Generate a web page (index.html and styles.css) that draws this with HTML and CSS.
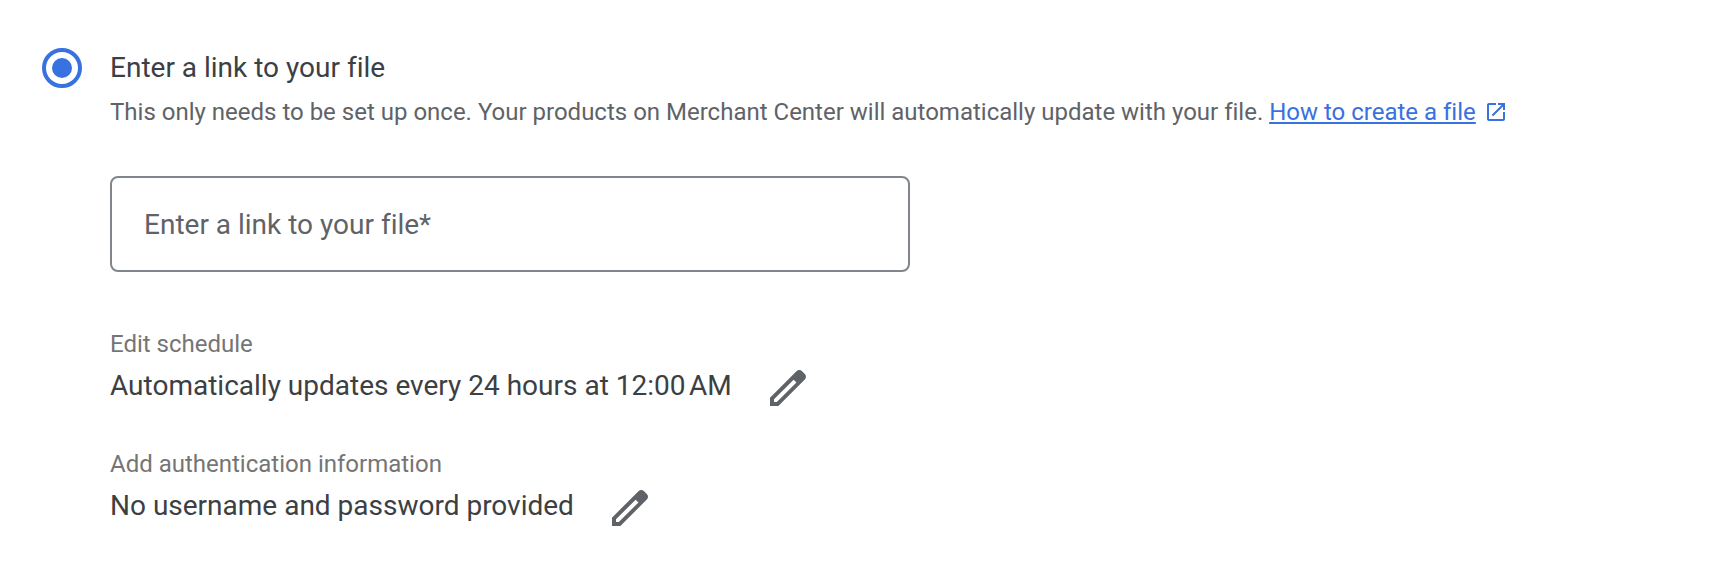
FILE: index.html
```html
<!DOCTYPE html>
<html lang="en">
  <head>
    <meta charset="UTF-8">
    <title>Add products from a file</title>
    <link rel="stylesheet" href="styles.css">
  </head>
  <body>
    <form class="source-option">
      <input type="radio" class="option-radio" id="linkOption" name="source" checked />

      <div class="option-content">
        <label for="linkOption" class="option-title">Enter a link to your file</label>
        <p class="option-help">
          This only needs to be set up once. Your products on Merchant Center will automatically update with your file.
          <a href="#" class="help-link"><span class="help-link-text">How to create a file</span><svg class="open-icon" viewBox="0 0 24 24" aria-hidden="true"><path d="M19 19H5V5h7V3H5c-1.11 0-2 .9-2 2v14c0 1.1.89 2 2 2h14c1.1 0 2-.9 2-2v-7h-2v7zM14 3v2h3.59l-9.83 9.83 1.41 1.41L19 6.41V10h2V3h-7z"/></svg></a>
        </p>

        <input type="url" class="link-input" id="fileLink" name="fileLink" placeholder="Enter a link to your file*" aria-label="Enter a link to your file" required />

        <div class="setting">
          <div class="setting-label">Edit schedule</div>
          <div class="setting-row">
            <span class="setting-value">Automatically updates every 24 hours at 12:00&#8239;AM</span>
            <button type="button" class="edit-btn" aria-label="Edit schedule">
              <svg viewBox="0 0 24 24"><path d="M20.41 4.94l-1.35-1.35c-.78-.78-2.05-.78-2.83 0L3 16.82V21h4.18L20.41 7.77c.79-.78.79-2.05 0-2.83zM6.41 19.06L5 19v-1.36l9.82-9.82 1.41 1.41-9.82 9.83z"/></svg>
            </button>
          </div>
        </div>

        <div class="setting">
          <div class="setting-label">Add authentication information</div>
          <div class="setting-row">
            <span class="setting-value">No username and password provided</span>
            <button type="button" class="edit-btn" aria-label="Add authentication information">
              <svg viewBox="0 0 24 24"><path d="M20.41 4.94l-1.35-1.35c-.78-.78-2.05-.78-2.83 0L3 16.82V21h4.18L20.41 7.77c.79-.78.79-2.05 0-2.83zM6.41 19.06L5 19v-1.36l9.82-9.82 1.41 1.41-9.82 9.83z"/></svg>
            </button>
          </div>
        </div>
      </div>
    </form>
  </body>
</html>
```

FILE: styles.css
```css
body {
  margin: 0;
  font-family: Roboto, Arial, sans-serif;
  font-size: 28px;
  line-height: 40px;
  font-variant-ligatures: none;
  color: #3c4043;
  background-color: #fff;
}

.source-option {
  display: flex;
  align-items: flex-start;
  gap: 28px;
  padding: 48px 42px;
}

.option-radio {
  appearance: none;
  flex: none;
  width: 40px;
  height: 40px;
  margin: 0;
  border: 4px solid #3871e0;
  border-radius: 50%;
  box-sizing: border-box;
  cursor: pointer;
}

.option-radio:checked::before {
  content: "";
  display: block;
  width: 20px;
  height: 20px;
  margin: 6px;
  border-radius: 50%;
  background-color: #3871e0;
}

.option-content {
  flex: 1;
  min-width: 0;
}

.option-title {
  display: block;
}

.option-help {
  margin: 4px 0 44px;
  font-size: 24px;
  color: #5f6368;
}

.help-link {
  color: #3871e0;
  text-decoration: none;
  white-space: nowrap;
}

.help-link-text {
  text-decoration: underline;
  text-decoration-thickness: 2px;
  text-underline-offset: 2px;
  text-decoration-skip-ink: none;
}

.open-icon {
  width: 24px;
  height: 24px;
  margin-left: 8px;
  fill: #3871e0;
  vertical-align: -4px;
}

.link-input {
  display: block;
  width: 100%;
  max-width: 800px;
  height: 96px;
  padding: 0 32px;
  border: 2px solid #80868b;
  border-radius: 8px;
  box-sizing: border-box;
  font: inherit;
  font-variant-ligatures: none;
  color: #3c4043;
  background: none;
}

.link-input::placeholder {
  color: #5f6368;
  opacity: 1;
}

.setting {
  margin-top: 32px;
}

.link-input + .setting {
  margin-top: 52px;
}

.setting-label {
  font-size: 24px;
  color: #757575;
}

.setting-row {
  display: flex;
  align-items: flex-start;
  gap: 32px;
}

.setting-value {
  line-height: 44px;
}

.edit-btn {
  width: 48px;
  height: 48px;
  padding: 0;
  border: none;
  background: none;
  cursor: pointer;
}

.edit-btn svg {
  display: block;
  width: 48px;
  height: 48px;
  fill: #5f6368;
}
```
